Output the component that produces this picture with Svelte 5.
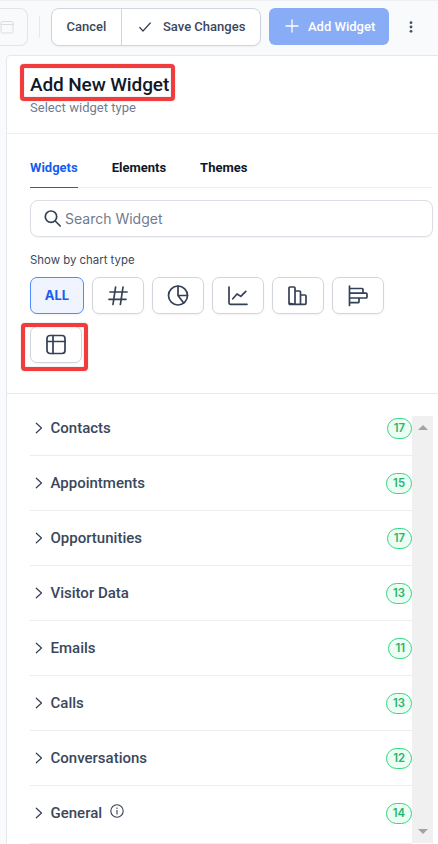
<script>
    let activeTab = $state("Widgets");
    let activeType = $state("all");
    let search = $state("");

    const tabs = ["Widgets", "Elements", "Themes"];

    const chartTypes = ["all", "number", "pie", "line", "column", "bar", "table"];

    const groups = [
        { name: "Contacts", count: 17 },
        { name: "Appointments", count: 15 },
        { name: "Opportunities", count: 17 },
        { name: "Visitor Data", count: 13 },
        { name: "Emails", count: 11 },
        { name: "Calls", count: 13 },
        { name: "Conversations", count: 12 },
        { name: "General", count: 14, info: true }
    ];
</script>

<div class="page">
    <header class="toolbar">
        <button class="date" aria-label="Date range">
            <svg width="14" height="14" viewBox="0 0 14 14">
                <rect x="1" y="1.5" width="12" height="11.5" rx="1.5"/>
                <path d="M1 4.5h12"/>
            </svg>
        </button>
        <span class="divider"></span>
        <div class="button-group">
            <button class="cancel">Cancel</button>
            <button class="save">
                <svg width="14" height="12" viewBox="0 0 14 12"><path d="M1.8 6.5l3.2 3.5L12.300 2"/></svg>
                <span>Save Changes</span>
            </button>
        </div>
        <button class="add">
            <svg width="14" height="14" viewBox="0 0 14 14"><path d="M7 1v12M1 7h12"/></svg>
            <span>Add Widget</span>
        </button>
        <button class="more" aria-label="More">
            <svg width="4" height="12" viewBox="0 0 4 12">
                <circle cx="2" cy="1.7" r="1.4"/>
                <circle cx="2" cy="6" r="1.4"/>
                <circle cx="2" cy="10.3" r="1.4"/>
            </svg>
        </button>
    </header>

    <main class="panel">
        <div class="heading">
            <h1>Add New Widget</h1>
            <p>Select widget type</p>
            <span class="marker title-marker"></span>
        </div>

        <div class="filters">
            <nav>
                {#each tabs as tab}
                    <button class:active={tab === activeTab} onclick={() => activeTab = tab}>{tab}</button>
                {/each}
            </nav>

            <label class="search">
                <svg width="18" height="18" viewBox="0 0 18 18"><circle cx="7" cy="6.700" r="5.700"/><path d="M11.200 11l5 5"/></svg>
                <input placeholder="Search Widget" bind:value={search}/>
            </label>

            <div class="caption">Show by chart type</div>
            <div class="types">
                {#each chartTypes as type}
                    <button class="type {type}" class:active={type === activeType}
                            aria-label={type} onclick={() => activeType = type}>
                        {#if type === "all"}
                            ALL
                        {:else}
                            <svg width="22" height="22" viewBox="0 0 22 22">
                                {#if type === "number"}
                                    <path d="M8.600 2L6 19.500M16 2l-2.600 17.500M3 7h17M2 14.300h17"/>
                                {:else if type === "pie"}
                                    <circle cx="11" cy="10.500" r="9.500"/>
                                    <path d="M11 1v9.500h9.500M11 10.500l5.700 7.600"/>
                                {:else if type === "line"}
                                    <path d="M2 2v16a1.300 1.300 0 0 0 1.300 1.300H20M5.800 13.800l4.200-4.800 3.800 2.400 5-5"/>
                                {:else if type === "column"}
                                    <path d="M2 18.300V3q0-1 1-1h4q1 0 1 1v16.300zM8 6h4.500q1 0 1 1v12.300H8M13.500 10H18q1 0 1 1v7.300q0 1-1 1H3q-1 0-1-1"/>
                                {:else if type === "bar"}
                                    <path d="M2.500 1.200v19.300M2.500 3.500H15q1 0 1 1v3.700H2.500M16 8.200h3q1 0 1 1V12q0 1-1 1H2.500M12 13v3.700q0 1-1 1H2.500"/>
                                {:else}
                                    <rect x="2" y="1.500" width="18" height="18" rx="3"/>
                                    <path d="M8 1.500v18M2 7.500h18"/>
                                {/if}
                            </svg>
                        {/if}
                        {#if type === "table"}
                            <span class="marker table-marker"></span>
                        {/if}
                    </button>
                {/each}
            </div>
        </div>

        <div class="list">
            <ul>
                {#each groups as group}
                    <li>
                        <svg class="chevron" width="8" height="12" viewBox="0 0 8 12"><path d="M1.300 1.200L6.500 6l-5.200 4.800"/></svg>
                        <span class="name">{group.name}</span>
                        {#if group.info}
                            <svg class="info" width="14" height="14" viewBox="0 0 14 14">
                                <circle cx="7" cy="7" r="6.200"/>
                                <path d="M7 6.300v3.800M7 3.900v.5"/>
                            </svg>
                        {/if}
                        <span class="count">{group.count}</span>
                    </li>
                {/each}
            </ul>
            <div class="scrollbar">
                <i class="up"></i>
                <i class="down"></i>
            </div>
        </div>
    </main>
</div>

<style>
    :global(body) {
        overflow: hidden;
    }

    .page {
        box-sizing: border-box;
        width: 438px;
        height: 844px;
        overflow: hidden;
        border-top: 1px solid #eff0f3;
        background: #f9fafb;
        color: #3b475b;
        font-family: Roboto, sans-serif;
    }

    .page * {
        box-sizing: border-box;
    }

    button {
        margin: 0;
        padding: 0;
        border: none;
        background: none;
        color: inherit;
        font: inherit;
    }

    svg {
        flex: none;
        fill: none;
        stroke: #344054;
        stroke-width: 1.7;
        stroke-linecap: round;
        stroke-linejoin: round;
    }

    /** toolbar **/

    .toolbar {
        display: flex;
        height: 54px;
        padding-top: 7px;
        font-size: 13px;
        font-weight: 500;
    }

    .toolbar button {
        display: flex;
        align-items: center;
        padding-bottom: 1px;
    }

    .toolbar .date {
        width: 28px;
        height: 38px;
        border: 1px solid #e4e4e8;
        border-left: none;
        border-radius: 0 8px 8px 0;
    }

    .date svg {
        stroke: #dcdcdf;
        stroke-width: 1;
    }

    .divider {
        width: 1px;
        height: 22px;
        margin: 8px 11px 0;
        background: #e6e8ec;
    }

    .button-group {
        display: flex;
        width: 210px;
        height: 38px;
        border: 1px solid #d0d5dd;
        border-radius: 8px;
        background: #fff;
        box-shadow: 0 1px 2px #1018280d;
    }

    .cancel {
        justify-content: center;
        width: 70px;
        border-right: 1px solid #d0d5dd;
    }

    .save {
        gap: 11px;
        padding-left: 16px;
    }

    .save svg {
        stroke-width: 1.2;
    }

    .toolbar .add {
        gap: 9px;
        width: 120px;
        height: 37px;
        margin-left: 8px;
        padding-left: 16px;
        border-radius: 6px;
        background: #89acf7;
        color: #fff;
    }

    .add svg {
        stroke: #fff;
        stroke-width: 1.3;
    }

    .more {
        margin-left: 20px;
        height: 38px;
    }

    .more svg {
        margin-top: 1px;
        fill: #475467;
        stroke: none;
    }

    /** panel **/

    .panel {
        width: 440px;
        height: 795px;
        margin-left: 6px;
        border: 1px solid #e6e8ee;
        border-radius: 4px 0 0 0;
        background: #fff;
    }

    .heading {
        position: relative;
        height: 78px;
        padding: 17px 0 0 23px;
        border-bottom: 1px solid #eceef2;
    }

    h1 {
        margin: 0;
        color: #101828;
        font-size: 19px;
        font-weight: 500;
        line-height: 24px;
        letter-spacing: -.12px;
    }

    p {
        margin: 2px 0 0;
        color: #717b91;
        font-size: 13px;
        line-height: 17px;
        letter-spacing: .03px;
    }

    .marker {
        position: absolute;
        border: 4px solid #f23b3c;
        border-radius: 4px;
        box-shadow: 0 0 1px #777, inset 0 0 1px #777;
    }

    .title-marker {
        left: 13px;
        top: 8px;
        width: 155px;
        height: 37px;
    }

    .filters {
        height: 260px;
        padding: 16px 0 0 23px;
        border-bottom: 1px solid #e6e8ee;
    }

    nav {
        display: flex;
        gap: 34px;
        width: 402px;
        height: 38px;
        border-bottom: 1px solid #ebecef;
    }

    nav button {
        height: 38px;
        padding-bottom: 3px;
        color: #101828;
        font-size: 13px;
        font-weight: 700;
    }

    nav button.active {
        padding-bottom: 2px;
        border-bottom: 1px solid #155eef;
        color: #155eef;
    }

    .search {
        display: flex;
        align-items: center;
        width: 403px;
        height: 37px;
        margin-top: 12px;
        padding-left: 13px;
        border: 1px solid #dcdee6;
        border-radius: 8px;
        box-shadow: 0 1px 2px #1018280d;
    }

    input {
        width: 300px;
        margin-left: 3px;
        padding: 0;
        border: none;
        outline: none;
        font: 14px Inter, sans-serif;
    }

    input::placeholder {
        color: #717b8f;
    }

    .caption {
        height: 16px;
        margin-top: 15px;
        font: 11.4px/17px Inter, sans-serif;
    }

    .types {
        display: flex;
        flex-wrap: wrap;
        gap: 12px 8px;
        width: 360px;
        margin-top: 9px;
    }

    .type {
        position: relative;
        display: flex;
        align-items: center;
        justify-content: center;
        width: 52px;
        height: 37px;
        border: 1px solid #d0d5dd;
        border-radius: 7px;
        box-shadow: 0 1px 2px #1018280d;
    }

    .type.all {
        width: 54px;
        padding-bottom: 2px;
        font: 700 13px Inter, sans-serif;
    }

    .type.active {
        border-color: #528bff;
        background: #eff4ff;
        color: #155eef;
    }

    .table-marker {
        left: -10px;
        top: -4px;
        width: 67px;
        height: 48px;
    }

    /** widget groups **/

    .list {
        display: flex;
    }

    ul {
        width: 405px;
        margin: 7px 0 0;
        padding: 0 0 0 23px;
        list-style: none;
    }

    li {
        display: flex;
        align-items: center;
        height: 55px;
        padding-left: 5px;
        border-bottom: 1px solid #ebedf1;
    }

    li:last-child {
        height: 58px;
        padding-bottom: 3px;
    }

    .chevron {
        stroke-width: 1.2;
    }

    .name {
        margin-left: 7.5px;
        font-size: 15px;
        font-weight: 500;
    }

    .info {
        margin: -5px 0 0 8px;
        stroke-width: 1.1;
    }

    .count {
        height: 21px;
        margin-left: auto;
        padding: 0 6px;
        border: 1px solid #32d583;
        border-radius: 11px;
        background: #ecfdf3;
        color: #27b56c;
        font: 600 11.3px/19px Inter, sans-serif;
    }

    .scrollbar {
        display: flex;
        flex-direction: column;
        justify-content: space-between;
        align-items: center;
        width: 21px;
        height: 427px;
        margin-top: 22px;
        padding: 9px 0;
        background: #f0f0f0;
    }

    .up {
        border: 5px solid transparent;
        border-top: none;
        border-bottom-color: #a3a3a3;
    }

    .down {
        border: 5px solid transparent;
        border-bottom: none;
        border-top-color: #a3a3a3;
    }
</style>
